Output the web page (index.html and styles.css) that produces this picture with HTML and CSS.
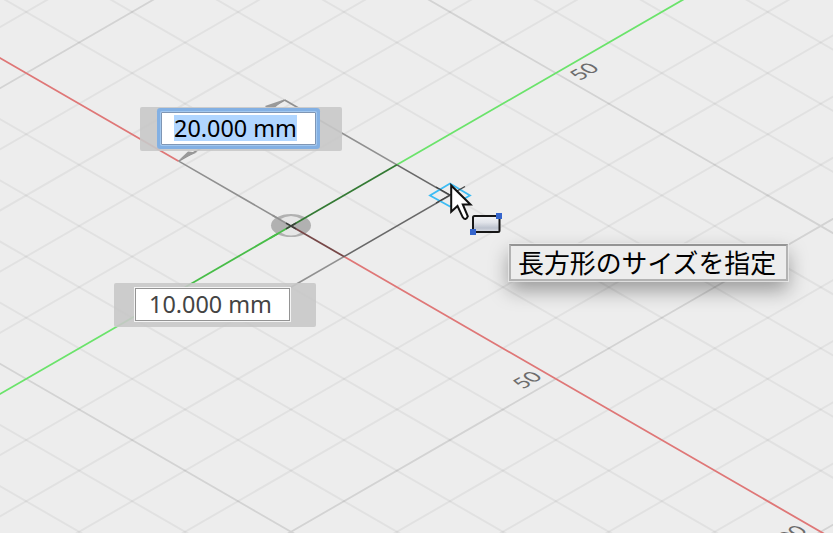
FILE: index.html
```html
<!DOCTYPE html>
<html lang="ja">
<head>
<meta charset="utf-8">
<title>Sketch</title>
<link rel="stylesheet" href="styles.css">
</head>
<body>
<main class="canvas">
  <svg class="scene" width="833" height="533" viewBox="0 0 833 533" aria-hidden="true">
    <!-- isometric plane: one unit is one grid cell -->
    <g transform="matrix(52.97 30.58 52.97 -30.58 291 226)">
      <path class="grid" d="M-8 -8H12M-8 -7H12M-8 -6H12M-8 -4H12M-8 -3H12M-8 -2H12M-8 -1H12M-8 1H12M-8 2H12M-8 3H12M-8 4H12M-8 6H12M-8 7H12M-8 8H12M-8 9H12"/>
      <path class="grid" d="M-7 -9V11M-6 -9V11M-4 -9V11M-3 -9V11M-2 -9V11M-1 -9V11M1 -9V11M2 -9V11M3 -9V11M4 -9V11M6 -9V11M7 -9V11M8 -9V11M9 -9V11"/>
      <path class="grid major" d="M-8 -5H12M-8 5H12M-5 -9V11M5 -9V11M10 -9V11"/>
      <path class="axis-x" d="M-8 0H-2.12M1 0H12"/>
      <path class="axis-y" d="M0 -9V-2M0 2V11"/>
      <path class="axis-y mid" d="M0 -2V0"/>
      <path class="dim" d="M-2.12 0H0M-2.12 2H0M-2.12 0V2M1 0V-2"/>
      <path class="edge" d="M0 2H1M1 0V2"/>
    </g>
    <path class="arrow" d="M179 160L188 151.500L197 152.500ZM284 99.500L265 106L268 109.500L275 107.500Z"/>
    <ellipse class="origin" cx="291" cy="225.500" rx="20" ry="11.500"/>
    <path class="origin-light" d="M279.500 219.500Q291 212.500 302.500 219.500L291 226ZM279.500 232Q291 239 302.500 232L291 226Z"/>
    <g transform="matrix(52.97 30.58 52.97 -30.58 291 226)">
      <path class="dim" d="M-.35 0H0"/>
      <path class="axis-y mid" d="M0 -.4V0"/>
      <path class="edge-x" d="M0 0H1"/>
      <path class="edge-y" d="M0 0V2"/>
    </g>
    <path class="origin-cross" d="M286 223.100L296 228.900M286 228.900L296 223.100"/>
    <text class="mark" transform="matrix(.866 -.5 .866 .5 580 81)">50</text>
    <text class="mark" transform="matrix(.866 -.5 .866 .5 523 389.500)">50</text>
    <text class="mark" text-anchor="end" transform="matrix(.866 -.5 .866 .5 808.500 531.500)">100</text>
    <path class="snap" d="M450 183.500L470 195.500L450 206.500L430 195.500Z"/>
    <path class="edge-end" d="M436 187L450 195L436 203M450 195L465 186.500"/>
    <defs>
      <linearGradient id="plate" x1="0" y1="0" x2="0" y2="1">
        <stop offset="0" stop-color="#f3f4f6"/>
        <stop offset=".4" stop-color="#e1e4ea"/>
        <stop offset=".75" stop-color="#bcc2ce"/>
        <stop offset="1" stop-color="#dde0e6"/>
      </linearGradient>
    </defs>
    <path class="pointer" d="M451.200 185.500V211.800L457.500 206L462.800 217.300Q465.600 221.300 467.800 216.300L462.800 204.500H470.500Z"/>
    <rect class="plate" x="473" y="216" width="26.500" height="16" rx="1.500"/>
    <path class="handle" d="M496 213h6v6h-6zM470 229h6v6h-6z"/>
  </svg>

  <div class="field field-height">
    <span class="input active"><span class="selected">20.000 mm</span></span>
  </div>
  <div class="field field-width">
    <span class="input">10.000 mm</span>
  </div>
  <div class="tooltip">長方形のサイズを指定</div>
</main>
</body>
</html>
```
FILE: styles.css
```css
* { box-sizing: border-box; }

body {
  margin: 0;
  background: #ededed;
}

.canvas {
  position: relative;
  width: 833px;
  height: 533px;
  overflow: hidden;
  background: #ededed;
  font-family: "Noto Sans", "Noto Sans CJK JP", sans-serif;
}

.scene { display: block; }
.scene path { vector-effect: non-scaling-stroke; }

.grid { fill: none; stroke: rgba(0, 0, 0, .048); stroke-width: 2; }
.major { stroke: rgba(0, 0, 0, .11); stroke-width: 1.8; }
.axis-x { fill: none; stroke: #df7777; stroke-width: 1.8; }
.axis-y { fill: none; stroke: #6be36b; stroke-width: 1.8; }
.axis-y.mid { stroke: #48bd48; }
.dim { fill: none; stroke: #909090; stroke-width: 1.6; }
.edge { fill: none; stroke: #686868; stroke-width: 1.6; }
.edge-x { fill: none; stroke: #774848; stroke-width: 1.7; }
.edge-y { fill: none; stroke: #347a34; stroke-width: 1.7; }
.edge-end { fill: none; stroke: #444; stroke-width: 1.3; }
.arrow { fill: #999; }

.origin { fill: #b1b1b1; }
.origin-light { fill: #e6e6e6; }
.origin-cross { fill: none; stroke: #3c3f3c; stroke-width: 1.6; }

.mark {
  fill: #6c6c6c;
  font: 400 20.5px Lato, "Open Sans", sans-serif;
}

.snap { fill: none; stroke: #3dbcf4; stroke-width: 1.8; }
.pointer { fill: #fff; stroke: #111; stroke-width: 2; stroke-linejoin: miter; }
.plate { fill: url(#plate); stroke: #161616; stroke-width: 2; }
.handle { fill: #3565cc; }

.field {
  position: absolute;
  display: flex;
  width: 202px;
  height: 44px;
  padding: 5px 0 0 21px;
  border-radius: 2px;
  background: rgba(200, 200, 200, .9);
}

.field-height { left: 140px; top: 107px; }
.field-width { left: 114px; top: 283px; }

.input {
  display: flex;
  align-items: center;
  width: 155px;
  height: 33px;
  padding: 0 0 2px 13px;
  border: 1px solid #949494;
  background: #fff;
  box-shadow: 0 0 0 1px #f4f4f4;
  color: #444;
  font-size: 23.4px;
  line-height: 26px;
  white-space: pre;
}

.input.active {
  padding-left: 12px;
  border-color: #7f96b4;
  border-radius: 1px;
  box-shadow: 0 0 0 1px #a3c8ef, 0 0 0 4px #83b0e3;
  color: #000;
}

.selected { height: 26px; background: #b1d6ff; }

.tooltip {
  position: absolute;
  left: 509px;
  top: 244px;
  width: 279px;
  height: 37px;
  padding-left: 7px;
  border: 2px solid #b3b3b3;
  border-top-color: #949494;
  background: #ededed;
  box-shadow: 0 0 0 1px rgba(235, 235, 235, .8), 0 9px 20px rgba(0, 0, 0, .36);
  color: #000;
  font: 25.9px/31px "Noto Sans CJK JP", sans-serif;
  white-space: nowrap;
}
```
